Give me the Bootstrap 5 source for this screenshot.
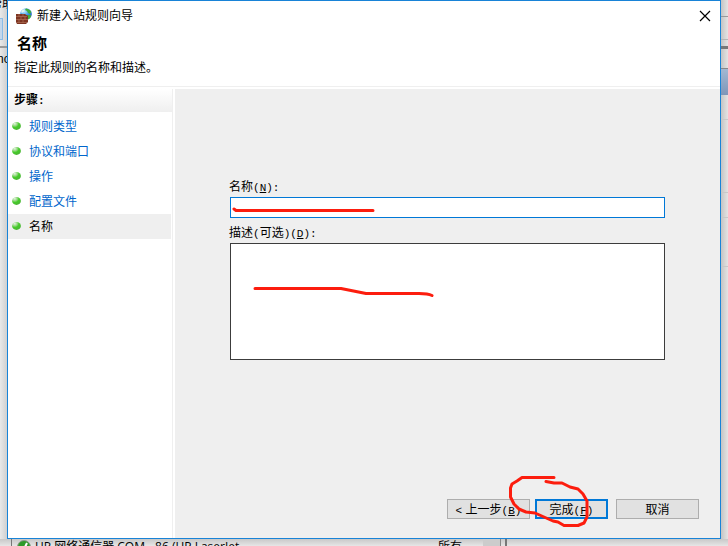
<!DOCTYPE html>
<html lang="zh-CN">
<head>
<meta charset="utf-8">
<meta name="viewport" content="width=device-width, initial-scale=1">
<title>新建入站规则向导</title>
<link href="https://cdn.jsdelivr.net/npm/bootstrap@5.3.0/dist/css/bootstrap.min.css" rel="stylesheet">
<style>
body{font-family:"Liberation Sans","Noto Sans CJK SC",sans-serif;font-size:12px;line-height:16px;color:#000;background:#e2e2e2}
.edge{flex:none;overflow:hidden;white-space:nowrap}
.edge-left{width:7px;background:linear-gradient(90deg,#e9e9e9,#d0d0d0)}
.edge-right{width:7px;background:linear-gradient(90deg,#c4c4c4,#e4e4e4)}
.edge-bottom{height:7px;background:linear-gradient(#c8c8c8,#e6e6e6);padding-left:7px;font-family:"Open Sans","Noto Sans CJK SC",sans-serif}
.edge-bottom .body-cells{border-left:1px solid #777;margin-left:4px;padding-left:5px;min-width:0}
.bar-end{width:18px;height:7px;background:#ccc;border-right:1px solid #888;margin:0 4px 0 21px}
.pane-end{width:223px;height:7px;border-left:2px solid #777}
.menu-bit{height:9px;line-height:9px;text-indent:-10px;overflow:hidden}
.tool-bit{height:22px;margin-top:9px;background:#c3d7ec;border:1px solid #8bbce6;border-left:0;margin-right:4px}
.addr-bit{margin-top:6px;height:2px;background:#999}
.name-bit{margin-top:3px;text-indent:-3px}
.r1{height:17px;border-bottom:1px solid #999}
.r2{height:23px;border-bottom:1px solid #b5b5b5}
.r3{height:9px;border-bottom:3px solid #777}
.r4{height:20px;border-bottom:1px solid #888}
.r5{height:26px;background:linear-gradient(#a3b8d3,#7e96b8)}
.r6{height:25px;border-bottom:1px solid #c8c8c8}
.r7{height:73px;border-bottom:1px solid #c8c8c8}
.r8{height:49px;border-bottom:1px solid #c8c8c8}
.wizard{border:1px solid #1883d7;background:#fff;min-width:0}
.titlebar{height:29px;padding:0 8px}
.app-title{padding-left:5px}
.close-btn{border:0;background:none;padding:0;width:14px;height:14px;line-height:0}
.heading-area{height:57px;padding:4px 0 0 6px;border-bottom:1px solid #efefef;margin-bottom:2px}
.heading-area h1{font-size:15px;line-height:20px;font-weight:700;margin:0 0 6px 3px}
.steps{width:165px;flex:none;border-right:1px solid #efefef;margin-right:2px}
.steps h2{font-size:12px;line-height:23px;font-weight:700;margin:0 0 2px;padding-left:6px;background:linear-gradient(#fff,#efefef)}
.step{height:25px;gap:8px;padding-left:4px;margin-right:1px}
.step svg{margin-top:-2px}
.step.current{background:#efefef}
.step a{color:#0066cc;text-decoration:none}
.step.current a{color:#000}
.work{background:#efefef;min-width:0}
.fields{padding:90px 55px 0 54px}
.fields label{display:block;height:16px;line-height:16px;margin-bottom:2px}
.fields .form-control{border-radius:0;box-shadow:none;background:#fff;font-size:12px;padding:2px 4px;margin-left:1px;width:calc(100% - 1px)}
#rule-name{height:21px;min-height:0;border:1px solid #0078d7;margin-bottom:7px}
#rule-desc{height:117px;min-height:0;border:1px solid #3c3c3c;resize:none}
.mono{font-family:"Liberation Mono",monospace;font-size:11px;line-height:1}
.actions{padding:0 21px 19px 0}
.wbtn{width:83px;height:20px;border-radius:0;border:1px solid #adadad;background:#e1e1e1;color:#000;font-size:12px;line-height:16px;padding:2px 0 0;white-space:nowrap}
.wbtn.main{width:73px;border:2px solid #0078d7;margin:0 8px 0 5px;padding-top:1px}
.markup{left:0;top:0;pointer-events:none}
</style>
<script src="https://cdn.jsdelivr.net/npm/bootstrap@5.3.0/dist/js/bootstrap.bundle.min.js"></script>
</head>
<body class="vh-100 overflow-hidden d-flex flex-column position-relative">
<svg width="0" height="0" class="position-absolute" aria-hidden="true">
  <defs>
    <radialGradient id="ball" cx=".3" cy=".2" r=".85"><stop offset="0" stop-color="#e4f3e0"/><stop offset=".35" stop-color="#8fd67c"/><stop offset=".55" stop-color="#46cc2a"/><stop offset="1" stop-color="#4bb236"/></radialGradient>
    <radialGradient id="globe" cx=".35" cy=".25" r=".8"><stop offset="0" stop-color="#c9efff"/><stop offset=".5" stop-color="#3d9ae6"/><stop offset="1" stop-color="#1450b4"/></radialGradient>
    <symbol id="dot" viewBox="0 0 9 8"><ellipse cx="4.500" cy="4" rx="4.400" ry="3.900" fill="url(#ball)"/></symbol>
  </defs>
</svg>
<div class="d-flex flex-grow-1">
  <div class="edge edge-left" aria-hidden="true">
    <div class="menu-bit">帮助</div><div class="tool-bit"></div><div class="addr-bit"></div><div class="name-bit">no</div>
  </div>
  <main class="wizard d-flex flex-column flex-grow-1">
    <header class="titlebar d-flex align-items-center">
      <svg width="16" height="16" viewBox="0 0 16 16" aria-hidden="true">
        <circle cx="10" cy="6" r="5.800" fill="url(#globe)"/>
        <path d="M10 .5Q14 1 15.300 4L14 6L12 5L11 3L9 2ZM11 7L15 7Q15 10 12 11.500Z" fill="#3fae3a"/>
        <path d="M5 4Q6 1.500 8.500 1.200L8 3.500L6 5Z" fill="#e1f7ee"/>
        <path d="M0 6L9 6L12 8V14L10 16H1L0 14Z" fill="#7d3522"/>
        <path d="M0 8.500H11M0 11.500H12M1 14.500H11M3 6V8.500M7 6V8.500M5 8.500V11.500M9 8.500V11.500M3 11.500V14.500M7 11.500V14.500" stroke="#b87a62" stroke-width=".6"/>
      </svg>
      <span class="app-title flex-grow-1">新建入站规则向导</span>
      <button type="button" class="close-btn" aria-label="关闭"><svg width="12" height="12" viewBox="0 0 12 12"><path d="M1 1L11 11M11 1L1 11" stroke="#000" stroke-width="1.200"/></svg></button>
    </header>
    <div class="heading-area"><h1>名称</h1><div>指定此规则的名称和描述。</div></div>
    <div class="d-flex flex-grow-1">
      <nav class="steps" aria-label="步骤">
        <h2>步骤<span class="mono">:</span></h2>
        <div class="step d-flex align-items-center"><svg width="9" height="8"><use href="#dot"/></svg><a href="#">规则类型</a></div>
        <div class="step d-flex align-items-center"><svg width="9" height="8"><use href="#dot"/></svg><a href="#">协议和端口</a></div>
        <div class="step d-flex align-items-center"><svg width="9" height="8"><use href="#dot"/></svg><a href="#">操作</a></div>
        <div class="step d-flex align-items-center"><svg width="9" height="8"><use href="#dot"/></svg><a href="#">配置文件</a></div>
        <div class="step current d-flex align-items-center"><svg width="9" height="8"><use href="#dot"/></svg><a href="#" aria-current="step">名称</a></div>
      </nav>
      <form class="work d-flex flex-column flex-grow-1 justify-content-between">
        <div class="fields">
          <label for="rule-name">名称<span class="mono">(<u>N</u>):</span></label>
          <input id="rule-name" type="text" class="form-control">
          <label for="rule-desc">描述<span class="mono">(</span>可选<span class="mono">)(<u>D</u>):</span></label>
          <textarea id="rule-desc" class="form-control"></textarea>
        </div>
        <div class="actions d-flex justify-content-end">
          <button type="button" class="btn wbtn"><span class="mono">&lt;</span> 上一步<span class="mono">(<u>B</u>)</span></button>
          <button type="button" class="btn wbtn main">完成<span class="mono">(<u>F</u>)</span></button>
          <button type="button" class="btn wbtn">取消</button>
        </div>
      </form>
    </div>
  </main>
  <div class="edge edge-right" aria-hidden="true">
    <div class="r1"></div><div class="r2"></div><div class="r3"></div><div class="r4"></div><div class="r5"></div><div class="r6"></div><div class="r7"></div><div class="r6"></div><div class="r8"></div>
  </div>
</div>
<div class="edge edge-bottom d-flex" aria-hidden="true">
  <div class="body-cells d-flex flex-grow-1">
    <svg class="flex-shrink-0" width="14" height="14" viewBox="0 0 14 14"><circle cx="7" cy="8" r="6.500" fill="#2f9a29" stroke="#8b9a8a"/><path d="M4 8L6.500 11L10 4" fill="none" stroke="#fff" stroke-width="2"/></svg>
    <span class="ms-1 flex-grow-1">HP 网络通信器 COM - 86 (HP LaserJet</span>
    <span class="row-profile">所有</span>
  </div>
  <div class="bar-end flex-shrink-0"></div><div class="pane-end flex-shrink-0"></div>
</div>
<svg class="markup position-absolute" width="728" height="546" viewBox="0 0 728 546" fill="none" stroke="#fc1d0e" stroke-width="3" stroke-linecap="round" stroke-linejoin="round" aria-hidden="true">
  <path d="M234 209L236 210.500H373"/>
  <path d="M255 288.500H341L366 293.500H419Q428 293.500 432 295.500"/>
  <path d="M554 477.500H522L517 481L512 484L510.500 488V497L514 504L519 509L526 512L535 513L544 517L553 521L558 522L564 525.500H578L584 523L587 517V501L583 494L578 489L570 487L562 483H554L546 481.500"/>
</svg>
</body>
</html>
